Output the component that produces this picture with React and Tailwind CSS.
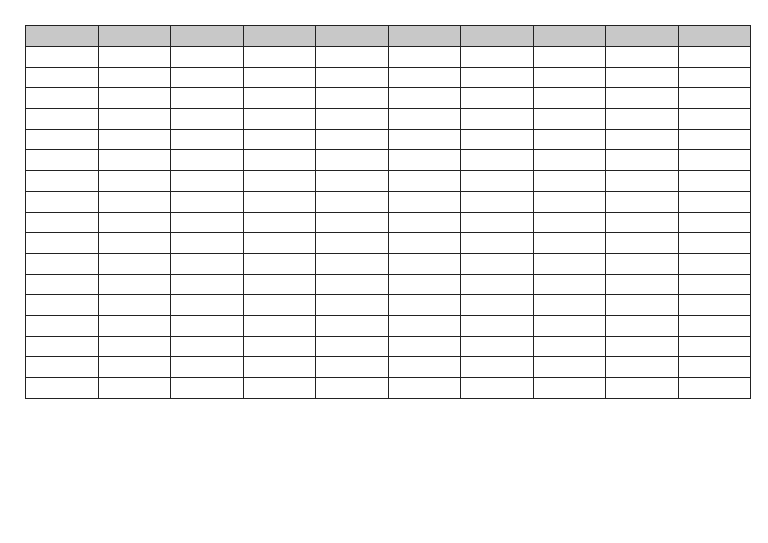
import React from 'react';

const COLS = 10;
const ROWS = 17;

const App = () => {
    const cols = Array.from({ length: COLS });
    const rows = Array.from({ length: ROWS });

    return (
        <div className="w-[768px] h-[543px] bg-white pt-[25px] pl-[25px]">
            <table className="border-collapse table-fixed w-[726px]">
                <thead>
                    <tr className="h-[21px]">
                        {cols.map((_, i) => (
                            <th key={i} className="border border-[#222] bg-[#c8c8c8] p-0"></th>
                        ))}
                    </tr>
                </thead>
                <tbody>
                    {rows.map((_, r) => (
                        <tr key={r} className="h-[20.7px]">
                            {cols.map((_, c) => (
                                <td key={c} className="border border-[#222] p-0"></td>
                            ))}
                        </tr>
                    ))}
                </tbody>
            </table>
        </div>
    );
};

export default App;
